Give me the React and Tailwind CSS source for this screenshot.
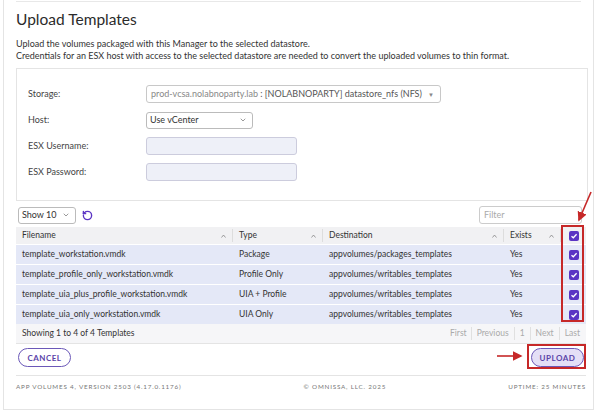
import { ChevronDown, RotateCcw } from "lucide-react";

const rows = [
  ["template_workstation.vmdk", "Package", "appvolumes/packages_templates", "Yes"],
  ["template_profile_only_workstation.vmdk", "Profile Only", "appvolumes/writables_templates", "Yes"],
  ["template_uia_plus_profile_workstation.vmdk", "UIA + Profile", "appvolumes/writables_templates", "Yes"],
  ["template_uia_only_workstation.vmdk", "UIA Only", "appvolumes/writables_templates", "Yes"],
];

// small purple checked box
const Check = () => (
  <span className="flex h-[10px] w-[10px] items-center justify-center rounded-[2px] bg-[#5b34c4]">
    <svg width="8" height="8" viewBox="0 0 8 8">
      <path d="M1.5 4.2 L3.3 5.8 L6.6 2.2" fill="none" stroke="white" strokeWidth="1.3" />
    </svg>
  </span>
);

const SortUp = () => (
  <svg width="5" height="4" viewBox="0 0 5 4" className="text-[#888]">
    <path d="M0.5 3.5 L2.5 1 L4.5 3.5" fill="none" stroke="currentColor" strokeWidth="0.8" />
  </svg>
);

const FormRow = ({ label, children }) => (
  <div className="flex h-[26px] items-center">
    <div className="w-[118px] text-[9px] text-[#444]">{label}</div>
    {children}
  </div>
);

export default function App() {
  return (
    <div
      className="relative h-[413px] w-[600px] overflow-hidden bg-white"
      style={{ fontFamily: "Lato, 'Open Sans', sans-serif" }}
    >
      <div className="ml-[3px] h-[410px] w-[591px] border-x border-b border-[#e4e4e4] px-[12px] pt-[1px]">
        <div className="border-t border-[#e8e8e8]" />
        <h1 className="mt-[6px] text-[15.5px] leading-[22px] text-[#2b2b2b]">Upload Templates</h1>
        <div className="mt-[8px] text-[9px] leading-[12px] text-[#333]">
          <p>Upload the volumes packaged with this Manager to the selected datastore.</p>
          <p>Credentials for an ESX host with access to the selected datastore are needed to convert the uploaded volumes to thin format.</p>
        </div>

        {/* form panel */}
        <div className="mt-[6px] h-[133px] w-[572px] border border-[#e4e4e4] pl-[11px] pt-[12px]">
          <FormRow label="Storage:">
            <div className="flex h-[18px] w-[295px] items-center justify-between whitespace-nowrap rounded-[3px] border border-[#c8c8c8] pl-[4px] pr-[6px] text-[9px] text-[#555]">
              <span>
                <span className="text-[#888]">prod-vcsa.nolabnoparty.lab</span> : [NOLABNOPARTY] datastore_nfs (NFS)
              </span>
              <span className="text-[6px] text-[#888]">▼</span>
            </div>
          </FormRow>
          <FormRow label="Host:">
            <div className="flex h-[17px] w-[107px] items-center justify-between rounded-[3px] border border-[#bbb] pl-[3px] pr-[5px] text-[9px] text-[#333]">
              <span>Use vCenter</span>
              <ChevronDown size={8} className="text-[#666]" />
            </div>
          </FormRow>
          <FormRow label="ESX Username:">
            <div className="h-[18px] w-[151px] rounded-[3px] border border-[#ccd] bg-[#eef0f8]" />
          </FormRow>
          <FormRow label="ESX Password:">
            <div className="h-[18px] w-[151px] rounded-[3px] border border-[#ccd] bg-[#eef0f8]" />
          </FormRow>
        </div>

        {/* table toolbar */}
        <div className="mt-[5px] flex items-center justify-between">
          <div className="flex items-center gap-[6px] pl-[2px]">
            <div className="flex h-[17px] w-[58px] items-center justify-between rounded-[3px] border border-[#bbb] pl-[3px] pr-[5px] text-[9px] text-[#333]">
              <span>Show 10</span>
              <ChevronDown size={8} className="text-[#666]" />
            </div>
            <RotateCcw size={11} strokeWidth={3} className="text-[#5b34c4]" />
          </div>
          <div className="mr-[-1px] flex h-[18px] w-[103px] items-center rounded-[3px] border border-[#ccc] pl-[4px] text-[9px] text-[#aaa]">
            Filter
          </div>
        </div>

        {/* table */}
        <div className="mt-[3px] w-[570px] text-[8.5px] text-[#333]">
          <div className="flex h-[17px] items-center bg-[#f1f1f3]">
            <div className="flex w-[217px] items-center justify-between border-r border-[#ddd] px-[6px]">
              <span>Filename</span>
              <SortUp />
            </div>
            <div className="flex w-[90px] items-center justify-between border-r border-[#ddd] px-[6px]">
              <span>Type</span>
              <SortUp />
            </div>
            <div className="flex w-[181px] items-center justify-between border-r border-[#ddd] px-[6px]">
              <span>Destination</span>
              <SortUp />
            </div>
            <div className="flex w-[57px] items-center justify-between border-r border-[#ddd] px-[6px]">
              <span>Exists</span>
              <SortUp />
            </div>
            <div className="flex w-[25px] justify-center">
              <Check />
            </div>
          </div>
          {rows.map((r) => (
            <div key={r[0]} className="flex h-[20px] items-center border-t border-white bg-[#e4e8f7]">
              <div className="w-[217px] px-[6px]">{r[0]}</div>
              <div className="w-[90px] px-[6px]">{r[1]}</div>
              <div className="w-[181px] px-[6px]">{r[2]}</div>
              <div className="w-[57px] px-[6px]">{r[3]}</div>
              <div className="flex w-[25px] justify-center">
                <Check />
              </div>
            </div>
          ))}
          <div className="flex h-[20px] items-center justify-between border-b border-[#e4e4e4] bg-[#f6f6f8] pl-[6px] pr-[6px]">
            <span>Showing 1 to 4 of 4 Templates</span>
            <div className="flex items-center text-[#aaa]">
              <span className="px-[4px]">First</span>
              <span className="border-l border-[#e0e0e0] px-[5px]">Previous</span>
              <span className="border-l border-[#e0e0e0] px-[5px]">1</span>
              <span className="border-l border-[#e0e0e0] px-[5px]">Next</span>
              <span className="border-l border-[#e0e0e0] pl-[5px]">Last</span>
            </div>
          </div>
        </div>

        {/* buttons */}
        <div className="mt-[4px] flex w-[570px] items-center justify-between">
          <button className="ml-[2px] h-[19px] w-[53px] rounded-full border border-[#6b58b8] text-[8px] font-bold tracking-[0.5px] text-[#5a43a8]">
            CANCEL
          </button>
          <button className="mr-[2px] h-[19px] w-[53px] rounded-full border border-[#6b58b8] bg-[#e4dff6] text-[8px] font-bold tracking-[0.5px] text-[#5a43a8]">
            UPLOAD
          </button>
        </div>

        <div className="mt-[8px] flex w-[570px] justify-between border-t border-[#e4e4e4] pt-[6px] text-[6.3px] tracking-[0.8px] text-[#777]">
          <span>APP VOLUMES 4, VERSION 2503 (4.17.0.1176)</span>
          <span>© OMNISSA, LLC. 2025</span>
          <span>UPTIME: 25 MINUTES</span>
        </div>
      </div>

      {/* annotations */}
      <div className="absolute left-[561px] top-[225px] h-[97px] w-[23px] border-2 border-[#c62828]" />
      <div className="absolute left-[527px] top-[344px] h-[25px] w-[59px] border-2 border-[#c62828]" />
      <svg className="absolute left-0 top-0" width="600" height="413">
        <defs>
          <marker id="ah" markerWidth="6" markerHeight="6" refX="5" refY="3" orient="auto">
            <path d="M0 0 L6 3 L0 6 Z" fill="#c62828" />
          </marker>
        </defs>
        <line x1="591" y1="192" x2="579" y2="220" stroke="#c62828" strokeWidth="1.6" markerEnd="url(#ah)" />
        <line x1="497" y1="356" x2="521" y2="356" stroke="#c62828" strokeWidth="1.6" markerEnd="url(#ah)" />
      </svg>
    </div>
  );
}
